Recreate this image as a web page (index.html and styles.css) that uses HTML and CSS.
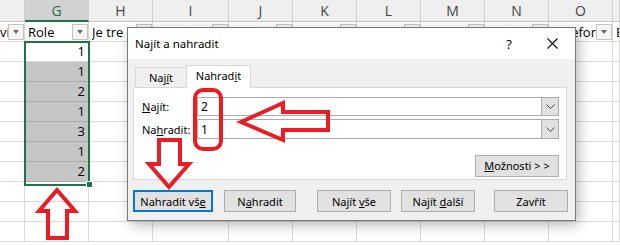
FILE: index.html
```html
<!DOCTYPE html>
<html lang="cs">
    <head>
        <meta charset="UTF-8" />
        <title>Najít a nahradit</title>
        <link rel="stylesheet" href="styles.css">
    </head>
    <body>
        <div class="sheet" id="sheet">
            <div class="hd"></div>
            <div class="hd hd-sel">G</div>
            <div class="hd">H</div>
            <div class="hd">I</div>
            <div class="hd">J</div>
            <div class="hd">K</div>
            <div class="hd">L</div>
            <div class="hd">M</div>
            <div class="hd">N</div>
            <div class="hd">O</div>
            <div class="hd"></div>

            <div class="cell flt flt-end"><span class="txt">vi</span><span class="dd"></span></div>
            <div class="cell flt"><span class="txt">Role</span><span class="dd"></span></div>
            <div class="cell flt"><span class="txt">Je tre</span><span class="dd"></span></div>
            <div class="cell flt"><span class="dd"></span></div>
            <div class="cell flt"><span class="dd"></span></div>
            <div class="cell flt"><span class="dd"></span></div>
            <div class="cell flt"><span class="dd"></span></div>
            <div class="cell flt"><span class="dd"></span></div>
            <div class="cell flt"><span class="dd"></span></div>
            <div class="cell flt flt-end"><span class="txt">efor</span><span class="dd"></span></div>
            <div class="cell flt"><span class="txt">E</span></div>
        </div>

        <!-- vybraná oblast G2:G8 -->
        <div class="selbox"></div>
        <div class="handle"></div>

        <div class="dialog">
            <div class="titlebar">
                <span class="title">Najít a nahradit</span>
                <span class="help">?</span>
                <svg class="close" width="11" height="11" viewBox="0 0 11 11">
                    <path d="M0.5 0.5L10.5 10.5M10.5 0.5L0.5 10.5" stroke="#111" stroke-width="1.1" fill="none" />
                </svg>
            </div>
            <div class="dlg-body">
                <div class="tabs">
                    <div class="tab">Naj<u>í</u>t</div>
                    <div class="tab tab-active">Nahrad<u>i</u>t</div>
                </div>
                <div class="panel">
                    <label class="lbl"><u>N</u>ajít:</label>
                    <div class="combo">
                        <span class="val">2</span>
                        <span class="drop">
                            <svg width="9" height="5" viewBox="0 0 9 5"><path d="M0.5 0.5L4.5 4.5L8.5 0.5" stroke="#444" fill="none" /></svg>
                        </span>
                    </div>
                    <label class="lbl">Na<u>h</u>radit:</label>
                    <div class="combo">
                        <span class="val">1</span>
                        <span class="drop">
                            <svg width="9" height="5" viewBox="0 0 9 5"><path d="M0.5 0.5L4.5 4.5L8.5 0.5" stroke="#444" fill="none" /></svg>
                        </span>
                    </div>
                    <button class="btn btn-opt"><u>M</u>ožnosti &gt; &gt;</button>
                </div>
                <div class="btnrow">
                    <button class="btn btn-main">Nahradit vš<u>e</u></button>
                    <button class="btn btn-repl">N<u>a</u>hradit</button>
                    <button class="btn btn-findall">Najít <u>v</u>še</button>
                    <button class="btn btn-next">Najít <u>d</u>alší</button>
                    <button class="btn btn-close">Zavřít</button>
                </div>
            </div>
        </div>

        <!-- červené šipky a rámeček -->
        <svg class="marks" width="620" height="245" viewBox="0 0 620 245">
            <rect x="195" y="90" width="26" height="59" rx="8" />
            <polygon points="241,122 283,103 283,112 328,112 328,130 283,130 283,140" />
            <polygon points="159,140 180,140 180,164 189,164 169,187 149,164 159,164" />
            <polygon points="57,190 75,211 67,211 67,238 48,238 48,211 39,211" />
        </svg>

        <script>
            // doplnění datových řádků listu
            const values = [1, 1, 2, 1, 3, 1, 2];
            const sheet = document.getElementById("sheet");

            for (let r = 0; r < 10; r++) {
                for (let c = 0; c < 11; c++) {
                    const cell = document.createElement("div");
                    cell.className = "cell";
                    if (c === 1 && r < values.length) {
                        cell.classList.add("num");
                        cell.textContent = values[r];
                        if (r > 0) cell.classList.add("sg");
                    }
                    sheet.appendChild(cell);
                }
            }
        </script>
    </body>
</html>
```

FILE: styles.css
```css
* {
    box-sizing: border-box;
    margin: 0;
    padding: 0;
}

body {
    width: 620px;
    height: 245px;
    overflow: hidden;
    position: relative;
    background: #fff;
    font-family: "Open Sans", sans-serif;
    color: #000;
}

/* List */
.sheet {
    display: grid;
    grid-template-columns: 25px 64px 64px 76px 64px 64px 64px 64px 64px 64px 7px;
    grid-template-rows: 22px;
    grid-auto-rows: 20px;
    font-size: 13px;
}

.hd {
    background: #efefef;
    border-right: 1px solid #d0d0d0;
    border-bottom: 1px solid #c8c8c8;
    color: #444;
    text-align: center;
    line-height: 21px;
    font-size: 14px;
}

.hd-sel {
    background: #d2d2d2;
    color: #217346;
    border-bottom: 2px solid #217346;
}

.cell {
    border-right: 1px solid #dadada;
    border-bottom: 1px solid #dadada;
    overflow: hidden;
    white-space: nowrap;
}

.flt {
    display: flex;
    align-items: center;
    padding-left: 3px;
}

.flt-end {
    justify-content: flex-end;
    padding-left: 0;
}

.txt {
    overflow: hidden;
    flex: 0 1 auto;
}

.dd {
    flex: none;
    margin-left: auto;
    width: 16px;
    height: 16px;
    border: 1px solid #c4c4c4;
    background: #f6f6f6;
    position: relative;
}

.flt-end .dd {
    margin-left: 0;
}

.dd::after {
    content: "";
    position: absolute;
    left: 4px;
    top: 5px;
    border-left: 3.5px solid transparent;
    border-right: 3.5px solid transparent;
    border-top: 4px solid #6a6a6a;
}

.num {
    text-align: right;
    padding-right: 3px;
    line-height: 19px;
}

.sg {
    background: #c6c6c6;
    border-bottom-color: #ababab;
}

.selbox {
    position: absolute;
    left: 24px;
    top: 41px;
    width: 66px;
    height: 145px;
    border: 2px solid #217346;
}

.handle {
    position: absolute;
    left: 86px;
    top: 181px;
    width: 7px;
    height: 7px;
    background: #217346;
    border: 1px solid #fff;
}

/* Dialog */
.dialog {
    position: absolute;
    left: 127px;
    top: 27px;
    width: 449px;
    height: 194px;
    background: #f0f0f0;
    border: 1px solid #7a7a7a;
    box-shadow: 3px 4px 12px rgba(0, 0, 0, 0.28);
    font-family: "Noto Sans", sans-serif;
    font-size: 11px;
}

.titlebar {
    height: 31px;
    background: #fff;
    display: flex;
    align-items: center;
    padding-left: 7px;
}

.title {
    font-size: 11.5px;
}

.help {
    margin-left: auto;
    font-size: 13px;
}

.close {
    margin: 0 17px 0 35px;
}

.dlg-body {
    padding: 6px 7px 0 5px;
}

.tabs {
    display: flex;
    align-items: flex-end;
    height: 22px;
    margin-left: 2px;
}

.tab {
    height: 20px;
    width: 51px;
    border: 1px solid #d9d9d9;
    border-bottom: none;
    border-right: none;
    text-align: center;
    line-height: 20px;
}

.tab-active {
    width: 65px;
    height: 23px;
    margin-bottom: -1px;
    background: #fff;
    border-right: 1px solid #d9d9d9;
    position: relative;
    z-index: 1;
    line-height: 20px;
}

.panel {
    width: 434px;
    height: 93px;
    background: #fff;
    border: 1px solid #d9d9d9;
    padding: 9px 7px 0 8px;
    display: grid;
    grid-template-columns: 55px 1fr;
    grid-template-rows: 19px 20px;
    row-gap: 3px;
    align-items: center;
}

.lbl {
    white-space: nowrap;
}

.combo {
    height: 100%;
    border: 1px solid #acacac;
    display: flex;
    align-items: center;
}

.val {
    padding-left: 3px;
    flex: 1;
    font-size: 12px;
}

.drop {
    width: 17px;
    height: 100%;
    background: #e1e1e1;
    border-left: 1px solid #acacac;
    display: flex;
    align-items: center;
    justify-content: center;
}

.btn {
    height: 22px;
    width: 74px;
    background: #e1e1e1;
    border: 1px solid #adadad;
    font-family: "Noto Sans", sans-serif;
    font-size: 11px;
    color: #000;
}

.btn-opt {
    grid-column: 2;
    justify-self: end;
    width: 84px;
    margin-top: 10px;
}

.btnrow {
    display: flex;
    margin-top: 10px;
}

.btn-main {
    width: 80px;
    border: 2px solid #0078d7;
}

.btn-repl {
    width: 72px;
    margin-left: 11px;
}

.btn-findall {
    margin-left: 21px;
}

.btn-next {
    margin-left: 10px;
}

.btn-close {
    margin-left: 19px;
}

/* Anotace */
.marks {
    position: absolute;
    left: 0;
    top: 0;
    fill: none;
    stroke: #ed1c24;
    stroke-width: 4;
    stroke-linejoin: miter;
}
```
